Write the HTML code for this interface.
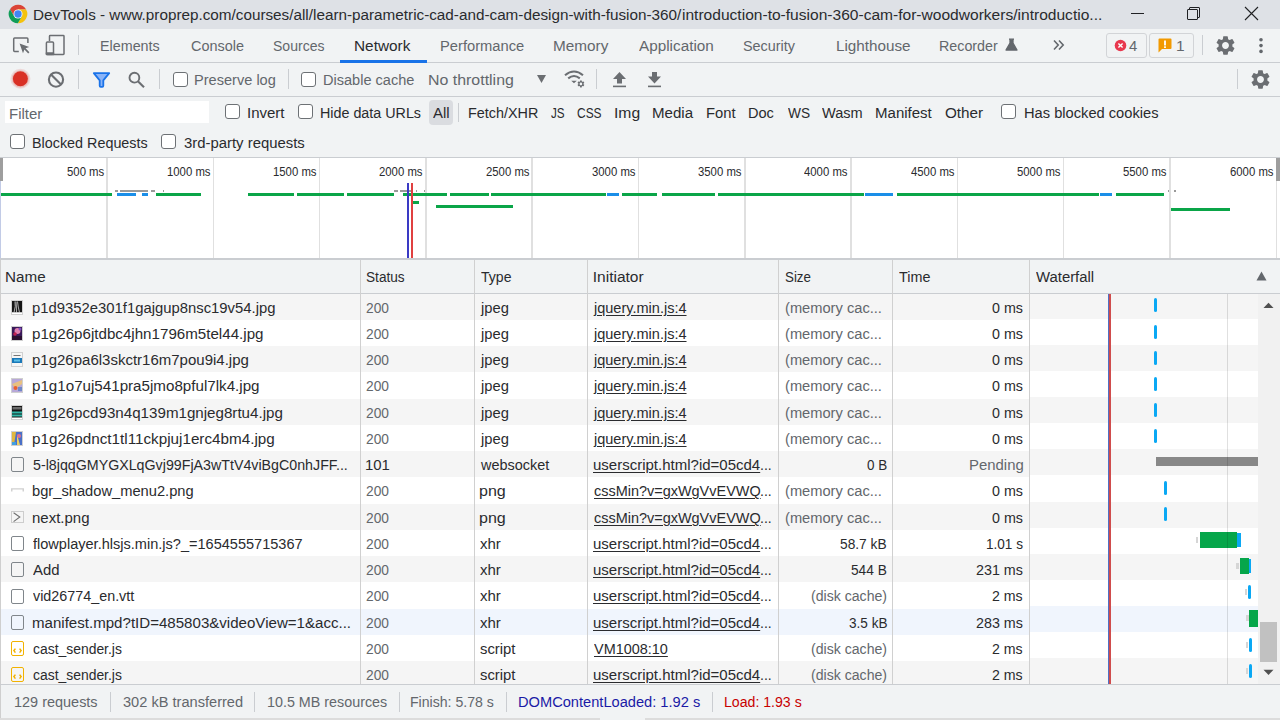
<!DOCTYPE html>
<html><head><meta charset="utf-8"><style>
*{box-sizing:border-box;margin:0;padding:0}
html,body{width:1280px;height:720px;overflow:hidden;background:#f1f3f4;font-family:"Liberation Sans",sans-serif;font-size:15px;color:#202124}
.a{position:absolute}
.t{position:absolute;white-space:nowrap;transform-origin:0 0}
</style></head><body>
<div class="a" style="left:0;top:0;width:1280px;height:29px;background:#dee1e6"></div>
<svg class="a" style="left:7.7px;top:3.6px" width="20" height="20" viewBox="0 0 20 20"><path d="M10 10L6.10 12.25L2.03 5.20A9.3 9.3 0 0 1 18.14 5.50L10.00 5.50Z" fill="#db4437"/> <path d="M10 10L10.00 5.50L18.14 5.50A9.3 9.3 0 0 1 9.83 19.30L13.90 12.25Z" fill="#f4c20d"/> <path d="M10 10L13.90 12.25L9.83 19.30A9.3 9.3 0 0 1 2.03 5.20L6.10 12.25Z" fill="#0f9d58"/> <circle cx="10" cy="10" r="4.5" fill="#fff"/><circle cx="10" cy="10" r="3.7" fill="#4285f4"/></svg>
<div class="a" style="left:1131px;top:13px;width:13px;height:1px;background:#202124"></div>
<div class="a" style="left:1189px;top:7px;width:11px;height:11px;border:1px solid #202124;border-radius:1px"></div>
<div class="a" style="left:1187px;top:9px;width:11px;height:11px;border:1px solid #202124;background:#dee1e6;border-radius:1px"></div>
<svg class="a" style="left:1244px;top:6px" width="15" height="15" viewBox="0 0 15 15"><path d="M1 1L14 14M14 1L1 14" stroke="#202124" stroke-width="1.1"/></svg>
<div class="a" style="left:0;top:62px;width:1280px;height:1px;background:#cacdd1"></div>
<svg class="a" style="left:12px;top:36px" width="20" height="20" viewBox="0 0 20 20">
 <path d="M6.8 15.5H2.6Q1.7 15.5 1.7 14.6V3Q1.7 2.1 2.6 2.1H15Q15.9 2.1 15.9 3V7" fill="none" stroke="#6b6e72" stroke-width="1.5"/>
 <path d="M7.6 7.6L17.2 11L13.6 12.3L17.4 16.2L16.2 17.4L12.4 13.5L11 17.2Z" fill="#6b6e72"/>
</svg>
<svg class="a" style="left:44px;top:34px" width="22" height="22" viewBox="0 0 22 22">
 <path d="M5.5 7V2.3Q5.5 1.6 6.2 1.6H19.3Q20 1.6 20 2.3V19.8Q20 20.5 19.3 20.5H9" fill="none" stroke="#6b6e72" stroke-width="1.5"/>
 <rect x="2.4" y="7.9" width="7.1" height="12.6" rx="1" fill="none" stroke="#6b6e72" stroke-width="1.5"/>
 <rect x="1.7" y="18.3" width="8.5" height="2.9" rx="0.8" fill="#6b6e72"/>
</svg>
<div class="a" style="left:78px;top:35px;width:1px;height:20px;background:#cacdd1"></div>
<div class="a" style="left:340px;top:60px;width:87px;height:3px;background:#1a73e8"></div>
<svg class="a" style="left:1005px;top:38px" width="13" height="13" viewBox="0 0 13 13"><path d="M4 1.2H9M5 1.2V5L1 12H12L8 5V1.2" fill="#63676c" stroke="#63676c" stroke-width="1.3" stroke-linejoin="round"/></svg>
<svg class="a" style="left:1052px;top:38px" width="14" height="14" viewBox="0 0 14 14"><path d="M2 2.5L6.2 7L2 11.5M7 2.5L11.2 7L7 11.5" fill="none" stroke="#63676c" stroke-width="1.6"/></svg>
<div class="a" style="left:1106px;top:33px;width:41px;height:25px;border:1px solid #d2d4d7;border-radius:3px"></div>
<svg class="a" style="left:1114px;top:39px" width="13" height="13" viewBox="0 0 13 13"><circle cx="6.5" cy="6.5" r="5.8" fill="#e8384e"/><path d="M4.4 4.4L8.6 8.6M8.6 4.4L4.4 8.6" stroke="#fff" stroke-width="1.4"/></svg>
<div class="a" style="left:1149px;top:33px;width:45px;height:25px;border:1px solid #d2d4d7;border-radius:3px"></div>
<svg class="a" style="left:1158px;top:38px" width="14" height="15" viewBox="0 0 14 15"><path d="M0.5 1.5Q0.5 0.5 1.5 0.5H12.5Q13.5 0.5 13.5 1.5V10Q13.5 11 12.5 11H4L0.5 14.5Z" fill="#f29900"/><rect x="6.1" y="2.5" width="1.8" height="5" fill="#fff"/><rect x="6.1" y="8.3" width="1.8" height="1.7" fill="#fff"/></svg>
<div class="a" style="left:1202px;top:35px;width:1px;height:20px;background:#cacdd1"></div>
<svg class="a" style="left:1214px;top:34px" width="23" height="23" viewBox="0 0 24 24"><path fill="#6b6e72" d="M19.14 12.94c.04-.3.06-.61.06-.94 0-.32-.02-.64-.07-.94l2.03-1.58a.49.49 0 0 0 .12-.61l-1.92-3.32a.488.488 0 0 0-.59-.22l-2.39.96c-.5-.38-1.03-.7-1.62-.94l-.36-2.54a.484.484 0 0 0-.48-.41h-3.84c-.24 0-.43.17-.47.41l-.36 2.54c-.59.24-1.13.57-1.62.94l-2.39-.96c-.22-.08-.47 0-.59.22L2.74 8.87c-.12.21-.08.47.12.61l2.03 1.58c-.05.3-.09.63-.09.94s.02.64.07.94l-2.03 1.58a.49.49 0 0 0-.12.61l1.92 3.32c.12.22.37.29.59.22l2.39-.96c.5.38 1.03.7 1.62.94l.36 2.54c.05.24.24.41.48.41h3.84c.24 0 .44-.17.47-.41l.36-2.54c.59-.24 1.13-.56 1.62-.94l2.39.96c.22.08.47 0 .59-.22l1.92-3.32c.12-.22.07-.47-.12-.61l-2.01-1.58zM12 15.6c-1.98 0-3.6-1.62-3.6-3.6s1.62-3.6 3.6-3.6 3.6 1.62 3.6 3.6-1.62 3.6-3.6 3.6z"/></svg>
<svg class="a" style="left:1257px;top:36px" width="8" height="20" viewBox="0 0 8 20"><circle cx="4" cy="3.8" r="1.8" fill="#63676c"/><circle cx="4" cy="9.6" r="1.8" fill="#63676c"/><circle cx="4" cy="15.4" r="1.8" fill="#63676c"/></svg>
<div class="a" style="left:0;top:96px;width:1280px;height:1px;background:#cacdd1"></div>
<svg class="a" style="left:8px;top:67px" width="25" height="25" viewBox="0 0 25 25"><circle cx="12.4" cy="11.8" r="10" fill="rgba(217,48,37,0.13)"/><circle cx="12.4" cy="11.8" r="8.6" fill="rgba(217,48,37,0.18)"/><circle cx="12.4" cy="11.8" r="7.5" fill="#d93025"/></svg>
<svg class="a" style="left:47px;top:70px" width="18" height="19" viewBox="0 0 18 19"><circle cx="9" cy="9.6" r="7.1" fill="none" stroke="#6b6e72" stroke-width="2.1"/><path d="M4 4.6L14 14.6" stroke="#6b6e72" stroke-width="2.1"/></svg>
<div class="a" style="left:78px;top:69px;width:1px;height:20px;background:#cacdd1"></div>
<svg class="a" style="left:92px;top:72px" width="19" height="16" viewBox="0 0 19 16"><path d="M1.8 1.2H17.2L11.3 8.3V13.8Q11.3 14.8 10.3 14.8H8.7Q7.7 14.8 7.7 13.8V8.3Z" fill="#8ab4f8" stroke="#1a73e8" stroke-width="1.8" stroke-linejoin="round"/></svg>
<svg class="a" style="left:127px;top:70px" width="19" height="19" viewBox="0 0 19 19"><circle cx="7.4" cy="7.7" r="4.9" fill="none" stroke="#6b6e72" stroke-width="1.9"/><path d="M10.9 11.2L17 17.3" stroke="#6b6e72" stroke-width="2.1"/></svg>
<div class="a" style="left:159px;top:69px;width:1px;height:20px;background:#cacdd1"></div>
<div class="a" style="left:173px;top:72px;width:15px;height:15px;border:1.4px solid #6d7175;border-radius:3px;background:#fff"></div>
<div class="a" style="left:288px;top:69px;width:1px;height:20px;background:#cacdd1"></div>
<div class="a" style="left:301px;top:72px;width:15px;height:15px;border:1.4px solid #6d7175;border-radius:3px;background:#fff"></div>
<svg class="a" style="left:537px;top:75px" width="9" height="8" viewBox="0 0 9 8"><path d="M0 0H9L4.5 8Z" fill="#6b6e72"/></svg>
<svg class="a" style="left:563px;top:69px" width="24" height="20" viewBox="0 0 24 20">
 <path d="M2 6.2Q11 -1.2 20 6.2" fill="none" stroke="#6b6e72" stroke-width="2.1"/>
 <path d="M5.2 9.4Q11 4.6 16.8 9.4" fill="none" stroke="#6b6e72" stroke-width="2.1"/>
 <path d="M8.2 11.8L11 14.2L13.8 11.8Z" fill="#6b6e72"/>
 <g transform="translate(13.6,10.6) scale(0.36)"><path fill="#6b6e72" d="M19.14 12.94c.04-.3.06-.61.06-.94 0-.32-.02-.64-.07-.94l2.03-1.58a.49.49 0 0 0 .12-.61l-1.92-3.32a.488.488 0 0 0-.59-.22l-2.39.96c-.5-.38-1.03-.7-1.62-.94l-.36-2.54a.484.484 0 0 0-.48-.41h-3.84c-.24 0-.43.17-.47.41l-.36 2.54c-.59.24-1.13.57-1.62.94l-2.39-.96c-.22-.08-.47 0-.59.22L2.74 8.87c-.12.21-.08.47.12.61l2.03 1.58c-.05.3-.09.63-.09.94s.02.64.07.94l-2.03 1.58a.49.49 0 0 0-.12.61l1.92 3.32c.12.22.37.29.59.22l2.39-.96c.5.38 1.03.7 1.62.94l.36 2.54c.05.24.24.41.48.41h3.84c.24 0 .44-.17.47-.41l.36-2.54c.59-.24 1.13-.56 1.62-.94l2.39.96c.22.08.47 0 .59-.22l1.92-3.32c.12-.22.07-.47-.12-.61l-2.01-1.58zM12 15.6c-1.98 0-3.6-1.62-3.6-3.6s1.62-3.6 3.6-3.6 3.6 1.62 3.6 3.6-1.62 3.6-3.6 3.6z"/></g>
</svg>
<div class="a" style="left:596px;top:69px;width:1px;height:20px;background:#cacdd1"></div>
<svg class="a" style="left:612px;top:71px" width="15" height="17" viewBox="0 0 15 17"><path d="M7.5 1L14 8H10V12.5H5V8H1Z" fill="#6b6e72"/><rect x="1" y="14.6" width="13" height="1.6" fill="#6b6e72"/></svg>
<svg class="a" style="left:647px;top:71px" width="15" height="17" viewBox="0 0 15 17"><path d="M7.5 12.5L14 5.5H10V1H5V5.5H1Z" fill="#6b6e72"/><rect x="1" y="14.6" width="13" height="1.6" fill="#6b6e72"/></svg>
<div class="a" style="left:1237px;top:69px;width:1px;height:20px;background:#cacdd1"></div>
<svg class="a" style="left:1249px;top:68px" width="23" height="23" viewBox="0 0 24 24"><path fill="#6b6e72" d="M19.14 12.94c.04-.3.06-.61.06-.94 0-.32-.02-.64-.07-.94l2.03-1.58a.49.49 0 0 0 .12-.61l-1.92-3.32a.488.488 0 0 0-.59-.22l-2.39.96c-.5-.38-1.03-.7-1.62-.94l-.36-2.54a.484.484 0 0 0-.48-.41h-3.84c-.24 0-.43.17-.47.41l-.36 2.54c-.59.24-1.13.57-1.62.94l-2.39-.96c-.22-.08-.47 0-.59.22L2.74 8.87c-.12.21-.08.47.12.61l2.03 1.58c-.05.3-.09.63-.09.94s.02.64.07.94l-2.03 1.58a.49.49 0 0 0-.12.61l1.92 3.32c.12.22.37.29.59.22l2.39-.96c.5.38 1.03.7 1.62.94l.36 2.54c.05.24.24.41.48.41h3.84c.24 0 .44-.17.47-.41l.36-2.54c.59-.24 1.13-.56 1.62-.94l2.39.96c.22.08.47 0 .59-.22l1.92-3.32c.12-.22.07-.47-.12-.61l-2.01-1.58zM12 15.6c-1.98 0-3.6-1.62-3.6-3.6s1.62-3.6 3.6-3.6 3.6 1.62 3.6 3.6-1.62 3.6-3.6 3.6z"/></svg>
<div class="a" style="left:5px;top:101px;width:204px;height:22px;background:#fff"></div>
<div class="a" style="left:225px;top:104px;width:15px;height:15px;border:1.4px solid #6d7175;border-radius:3px;background:#fff"></div>
<div class="a" style="left:298px;top:104px;width:15px;height:15px;border:1.4px solid #6d7175;border-radius:3px;background:#fff"></div>
<div class="a" style="left:429px;top:100px;width:24px;height:25px;background:#dadce0;border-radius:4px"></div>
<div class="a" style="left:458px;top:103px;width:1px;height:19px;background:#cacdd1"></div>
<div class="a" style="left:1001px;top:104px;width:15px;height:15px;border:1.4px solid #6d7175;border-radius:3px;background:#fff"></div>
<div class="a" style="left:10px;top:134px;width:15px;height:15px;border:1.4px solid #6d7175;border-radius:3px;background:#fff"></div>
<div class="a" style="left:161px;top:134px;width:15px;height:15px;border:1.4px solid #6d7175;border-radius:3px;background:#fff"></div>
<div class="a" style="left:0;top:157px;width:1280px;height:1px;background:#cacdd1"></div>
<div class="a" style="left:0;top:158px;width:1280px;height:100px;background:#fff"></div>
<div class="a" style="left:106.25px;top:158px;width:1.5px;height:100px;background:#e0e0e0"></div>
<div class="a" style="left:212.55px;top:158px;width:1.5px;height:100px;background:#e0e0e0"></div>
<div class="a" style="left:318.85px;top:158px;width:1.5px;height:100px;background:#e0e0e0"></div>
<div class="a" style="left:425.15px;top:158px;width:1.5px;height:100px;background:#e0e0e0"></div>
<div class="a" style="left:531.45px;top:158px;width:1.5px;height:100px;background:#e0e0e0"></div>
<div class="a" style="left:637.75px;top:158px;width:1.5px;height:100px;background:#e0e0e0"></div>
<div class="a" style="left:744.05px;top:158px;width:1.5px;height:100px;background:#e0e0e0"></div>
<div class="a" style="left:850.35px;top:158px;width:1.5px;height:100px;background:#e0e0e0"></div>
<div class="a" style="left:956.65px;top:158px;width:1.5px;height:100px;background:#e0e0e0"></div>
<div class="a" style="left:1062.95px;top:158px;width:1.5px;height:100px;background:#e0e0e0"></div>
<div class="a" style="left:1169.25px;top:158px;width:1.5px;height:100px;background:#e0e0e0"></div>
<div class="a" style="left:1275.55px;top:158px;width:1.5px;height:100px;background:#e0e0e0"></div>
<div class="a" style="left:0;top:258px;width:1280px;height:2px;background:#cacdd1"></div>
<div class="a" style="left:0;top:158px;width:3px;height:23px;background:#9e9e9e"></div>
<div class="a" style="left:0;top:181px;width:1px;height:77px;background:#c2cbe6"></div>
<div class="a" style="left:1276px;top:158px;width:4px;height:23px;background:#9e9e9e"></div>
<div class="a" style="left:1.0px;top:193px;width:110.7px;height:3px;background:#0aa548"></div>
<div class="a" style="left:116.9px;top:193px;width:18.9px;height:3px;background:#1a8ee8"></div>
<div class="a" style="left:141.8px;top:193px;width:6.4px;height:3px;background:#1a8ee8"></div>
<div class="a" style="left:156.0px;top:193px;width:44.8px;height:3px;background:#0aa548"></div>
<div class="a" style="left:247.6px;top:193px;width:46.4px;height:3px;background:#0aa548"></div>
<div class="a" style="left:297.2px;top:193px;width:46.8px;height:3px;background:#0aa548"></div>
<div class="a" style="left:347.0px;top:193px;width:46.7px;height:3px;background:#0aa548"></div>
<div class="a" style="left:403.0px;top:193px;width:43.7px;height:3px;background:#0aa548"></div>
<div class="a" style="left:449.6px;top:193px;width:39.1px;height:3px;background:#0aa548"></div>
<div class="a" style="left:491.0px;top:193px;width:114.8px;height:3px;background:#0aa548"></div>
<div class="a" style="left:607.0px;top:193px;width:11.9px;height:3px;background:#1a8ee8"></div>
<div class="a" style="left:621.7px;top:193px;width:35.0px;height:3px;background:#0aa548"></div>
<div class="a" style="left:661.9px;top:193px;width:53.1px;height:3px;background:#0aa548"></div>
<div class="a" style="left:718.0px;top:193px;width:146.2px;height:3px;background:#0aa548"></div>
<div class="a" style="left:865.3px;top:193px;width:27.8px;height:3px;background:#1a8ee8"></div>
<div class="a" style="left:897.0px;top:193px;width:202.0px;height:3px;background:#0aa548"></div>
<div class="a" style="left:1100.2px;top:193px;width:12.0px;height:3px;background:#1a8ee8"></div>
<div class="a" style="left:1115.5px;top:193px;width:48.1px;height:3px;background:#0aa548"></div>
<div class="a" style="left:115.0px;top:190px;width:3.0px;height:2px;background:#9a9a9a"></div>
<div class="a" style="left:119.5px;top:190px;width:28.7px;height:2px;background:#9a9a9a"></div>
<div class="a" style="left:151.0px;top:190px;width:4.0px;height:2px;background:#9a9a9a"></div>
<div class="a" style="left:163.0px;top:190px;width:1.0px;height:2px;background:#9a9a9a"></div>
<div class="a" style="left:394.0px;top:190px;width:4.0px;height:2px;background:#9a9a9a"></div>
<div class="a" style="left:400.0px;top:190px;width:8.0px;height:2px;background:#9a9a9a"></div>
<div class="a" style="left:409.0px;top:190px;width:3.0px;height:2px;background:#9a9a9a"></div>
<div class="a" style="left:416.0px;top:190px;width:1.0px;height:2px;background:#9a9a9a"></div>
<div class="a" style="left:424.0px;top:190px;width:1.0px;height:2px;background:#9a9a9a"></div>
<div class="a" style="left:1167.5px;top:190px;width:1.5px;height:2px;background:#9a9a9a"></div>
<div class="a" style="left:1174.0px;top:190px;width:1.5px;height:2px;background:#9a9a9a"></div>
<div class="a" style="left:412.4px;top:201px;width:6.6px;height:3px;background:#0aa548"></div>
<div class="a" style="left:436.4px;top:205px;width:77.1px;height:3px;background:#0aa548"></div>
<div class="a" style="left:1170.5px;top:208px;width:59.0px;height:3px;background:#0aa548"></div>
<div class="a" style="left:407.4px;top:183px;width:1.7px;height:75px;background:#3a3ac4"></div>
<div class="a" style="left:411px;top:183px;width:1.8px;height:75px;background:#e04040"></div>
<div class="a" style="left:0;top:260px;width:1280px;height:33px;background:#f1f3f4"></div>
<div class="a" style="left:0;top:293px;width:1280px;height:1px;background:#cacdd1"></div>
<svg class="a" style="left:1256px;top:271px" width="11" height="10" viewBox="0 0 11 10"><path d="M0.5 9.5H10.5L5.5 0.5Z" fill="#63676c"/></svg>
<div class="a" style="left:0;top:294px;width:1258px;height:390px;background:#fff;overflow:hidden">
<div class="a" style="left:0;top:-0.40px;width:1258px;height:26.25px;background:#f5f5f5"></div>
<div class="a" style="left:0;top:52.10px;width:1258px;height:26.25px;background:#f5f5f5"></div>
<div class="a" style="left:0;top:104.60px;width:1258px;height:26.25px;background:#f5f5f5"></div>
<div class="a" style="left:0;top:157.10px;width:1258px;height:26.25px;background:#f5f5f5"></div>
<div class="a" style="left:0;top:209.60px;width:1258px;height:26.25px;background:#f5f5f5"></div>
<div class="a" style="left:0;top:262.10px;width:1258px;height:26.25px;background:#f5f5f5"></div>
<div class="a" style="left:0;top:314.60px;width:1258px;height:26.25px;background:#f0f5fd"></div>
<div class="a" style="left:0;top:367.10px;width:1258px;height:26.25px;background:#f5f5f5"></div>
</div>
<div class="a" style="left:1030px;top:294px;width:228px;height:390px;background:#fff;overflow:hidden">
<div class="a" style="left:0;top:-1.10px;width:228px;height:26.08px;background:#f5f5f5"></div>
<div class="a" style="left:0;top:51.06px;width:228px;height:26.08px;background:#f5f5f5"></div>
<div class="a" style="left:0;top:103.22px;width:228px;height:26.08px;background:#f5f5f5"></div>
<div class="a" style="left:0;top:155.38px;width:228px;height:26.08px;background:#f5f5f5"></div>
<div class="a" style="left:0;top:207.54px;width:228px;height:26.08px;background:#f5f5f5"></div>
<div class="a" style="left:0;top:259.70px;width:228px;height:26.08px;background:#f5f5f5"></div>
<div class="a" style="left:0;top:311.86px;width:228px;height:26.08px;background:#f0f5fd"></div>
<div class="a" style="left:0;top:364.02px;width:228px;height:26.08px;background:#f5f5f5"></div>
</div>
<div class="a" style="left:360.0px;top:260px;width:1px;height:424px;background:#d0d0d0"></div>
<div class="a" style="left:474.0px;top:260px;width:1px;height:424px;background:#d0d0d0"></div>
<div class="a" style="left:587.0px;top:260px;width:1px;height:424px;background:#d0d0d0"></div>
<div class="a" style="left:778.0px;top:260px;width:1px;height:424px;background:#d0d0d0"></div>
<div class="a" style="left:892.0px;top:260px;width:1px;height:424px;background:#d0d0d0"></div>
<div class="a" style="left:1029.0px;top:260px;width:1px;height:424px;background:#d0d0d0"></div>
<div class="a" style="left:0;top:260px;width:1px;height:424px;background:#cfcfcf"></div>
<div class="a" style="left:1108px;top:294px;width:1.2px;height:390px;background:#5070c4"></div>
<div class="a" style="left:1109.2px;top:294px;width:2px;height:390px;background:#d04c4c"></div>
<div class="a" style="left:1258px;top:294px;width:22px;height:390px;background:#f1f1f1"></div>
<svg class="a" style="left:1263px;top:302px" width="11" height="7" viewBox="0 0 11 7"><path d="M0.5 6H10.5L5.5 0.8Z" fill="#505050"/></svg>
<svg class="a" style="left:1263px;top:669px" width="11" height="7" viewBox="0 0 11 7"><path d="M0.5 0.8H10.5L5.5 6Z" fill="#505050"/></svg>
<div class="a" style="left:1260px;top:622px;width:17px;height:40px;background:#c1c1c1"></div>
<svg class="a" style="left:11px;top:299.5px" width="12" height="15" viewBox="0 0 12 15"><rect x="0.5" y="0.5" width="11" height="14" fill="#fff" stroke="#d0d0d0"/><rect x="1" y="1" width="10" height="11.5" fill="#151515"/><path d="M4 1.5Q5 6 3 12.5M6.5 1.5Q7 7 8.5 12.5M5 1.5Q5.5 7 5.5 12.5" stroke="#bdbdbd" stroke-width="0.9" fill="none"/><rect x="1" y="12.5" width="10" height="1.5" fill="#fff"/></svg>
<div class="a" style="left:1154.0px;top:298.4px;width:3px;height:14px;background:#0aa8f4;border-radius:1.5px"></div>
<svg class="a" style="left:11px;top:325.8px" width="12" height="15" viewBox="0 0 12 15"><rect x="0.5" y="0.5" width="11" height="14" fill="#fff" stroke="#d0d0d0"/><rect x="1" y="1" width="10" height="13" fill="#3a1a5a"/><circle cx="6.5" cy="5" r="3" fill="#e080b0"/><circle cx="4" cy="8" r="1.8" fill="#c02050"/><rect x="1" y="10" width="10" height="4" fill="#2a1030"/><circle cx="9" cy="3" r="1.5" fill="#8050c0"/></svg>
<div class="a" style="left:1154.0px;top:324.5px;width:3px;height:14px;background:#0aa8f4;border-radius:1.5px"></div>
<svg class="a" style="left:11px;top:352.0px" width="12" height="15" viewBox="0 0 12 15"><rect x="0.5" y="0.5" width="11" height="14" fill="#fff" stroke="#d0d0d0"/><rect x="1" y="1" width="10" height="13" fill="#f6f6f6"/><rect x="2.5" y="3" width="7" height="1" fill="#777"/><rect x="1" y="6" width="10" height="5" fill="#1a78b8"/><rect x="3" y="7.5" width="6" height="2" fill="#5cc0e8"/></svg>
<div class="a" style="left:1154.0px;top:350.6px;width:3px;height:14px;background:#0aa8f4;border-radius:1.5px"></div>
<svg class="a" style="left:11px;top:378.3px" width="12" height="15" viewBox="0 0 12 15"><rect x="0.5" y="0.5" width="11" height="14" fill="#fff" stroke="#d0d0d0"/><rect x="1" y="1" width="10" height="13" fill="#b8a8d8"/><path d="M1 6L11 2V6L4 11Z" fill="#e8c080"/><circle cx="4.5" cy="10" r="2" fill="#e86030"/><rect x="7" y="9" width="4" height="4" fill="#7088c8"/></svg>
<div class="a" style="left:1154.0px;top:376.7px;width:3px;height:14px;background:#0aa8f4;border-radius:1.5px"></div>
<svg class="a" style="left:11px;top:404.5px" width="12" height="15" viewBox="0 0 12 15"><rect x="0.5" y="0.5" width="11" height="14" fill="#fff" stroke="#d0d0d0"/><rect x="1" y="1" width="10" height="13" fill="#151515"/><rect x="1.5" y="2" width="9" height="2.5" fill="#6a6a6a"/><rect x="1" y="6.5" width="10" height="2" fill="#30b8a8"/><rect x="1" y="9.5" width="10" height="2" fill="#30b8a8"/><rect x="1" y="12.5" width="10" height="1.5" fill="#fff"/></svg>
<div class="a" style="left:1154.0px;top:402.8px;width:3px;height:14px;background:#0aa8f4;border-radius:1.5px"></div>
<svg class="a" style="left:11px;top:430.8px" width="12" height="15" viewBox="0 0 12 15"><rect x="0.5" y="0.5" width="11" height="14" fill="#fff" stroke="#d0d0d0"/><rect x="1" y="1" width="10" height="13" fill="#4a70c8"/><path d="M1 1H5L3 14H1Z" fill="#e0b840"/><path d="M6 3L9 14H6Z" fill="#f0d060"/><circle cx="8" cy="5" r="2" fill="#e07090"/><rect x="1" y="11" width="4" height="3" fill="#40a0e0"/></svg>
<div class="a" style="left:1154.0px;top:428.8px;width:3px;height:14px;background:#0aa8f4;border-radius:1.5px"></div>
<div class="a" style="left:11px;top:457.3px;width:13px;height:15px;border:1.5px solid #80868b;border-radius:2px"></div>
<div class="a" style="left:1155.7px;top:457.4px;width:102.0px;height:9px;background:#888"></div>
<svg class="a" style="left:11px;top:488.4px" width="13" height="4" viewBox="0 0 13 4"><path d="M0.75 3.5V0.9H12.25V3.5" fill="none" stroke="#cfcfcf" stroke-width="1.4"/></svg>
<div class="a" style="left:1164.0px;top:481.0px;width:3px;height:14px;background:#0aa8f4;border-radius:1.5px"></div>
<div class="a" style="left:11px;top:510.9px;width:13px;height:12px;border:1px solid #cdcdcd"></div>
<svg class="a" style="left:11px;top:510.9px" width="13" height="12" viewBox="0 0 13 12"><path d="M2.6 1.8L8.8 6L2.6 10.6" fill="none" stroke="#6f6f6f" stroke-width="1.1"/></svg>
<div class="a" style="left:1164.0px;top:507.1px;width:3px;height:14px;background:#0aa8f4;border-radius:1.5px"></div>
<div class="a" style="left:11px;top:536.1px;width:13px;height:15px;border:1.5px solid #80868b;border-radius:2px"></div>
<div class="a" style="left:1195.6px;top:537.2px;width:2.5px;height:6px;background:#d6d6d6"></div>
<div class="a" style="left:1199.7px;top:531.9px;width:37.5px;height:16.6px;background:#06a64a"></div>
<div class="a" style="left:1237.2px;top:533.2px;width:3.7px;height:14px;background:#0aa8f4"></div>
<div class="a" style="left:11px;top:562.3px;width:13px;height:15px;border:1.5px solid #80868b;border-radius:2px"></div>
<div class="a" style="left:1236.0px;top:563.2px;width:2.5px;height:6px;background:#d6d6d6"></div>
<div class="a" style="left:1239.7px;top:557.9px;width:9.0px;height:16.6px;background:#06a64a"></div>
<div class="a" style="left:1248.7px;top:559.2px;width:2.2px;height:14px;background:#0aa8f4"></div>
<div class="a" style="left:11px;top:588.6px;width:13px;height:15px;border:1.5px solid #80868b;border-radius:2px"></div>
<div class="a" style="left:1245.0px;top:589.3px;width:2px;height:6px;background:#d6d6d6"></div>
<div class="a" style="left:1248.1px;top:585.3px;width:3px;height:14px;background:#0aa8f4;border-radius:1.5px"></div>
<div class="a" style="left:11px;top:614.8px;width:13px;height:15px;border:1.5px solid #80868b;border-radius:2px"></div>
<div class="a" style="left:1246.0px;top:615.4px;width:2.5px;height:6px;background:#d6d6d6"></div>
<div class="a" style="left:1249.3px;top:610.1px;width:9.0px;height:16.6px;background:#06a64a"></div>
<div class="a" style="left:11px;top:640.8px;width:13px;height:15px;border:1.6px solid #f2b200;border-radius:2px"></div>
<svg class="a" style="left:11px;top:640.8px" width="13" height="15" viewBox="0 0 13 15"><path d="M4.4 7.6L2.9 9.6L4.4 11.6M8.6 7.6L10.1 9.6L8.6 11.6" fill="none" stroke="#f2b200" stroke-width="1.5"/></svg>
<div class="a" style="left:1246.0px;top:641.5px;width:2px;height:6px;background:#d6d6d6"></div>
<div class="a" style="left:1249.3px;top:637.5px;width:3px;height:14px;background:#0aa8f4;border-radius:1.5px"></div>
<div class="a" style="left:11px;top:667.0px;width:13px;height:15px;border:1.6px solid #f2b200;border-radius:2px"></div>
<svg class="a" style="left:11px;top:667.0px" width="13" height="15" viewBox="0 0 13 15"><path d="M4.4 7.6L2.9 9.6L4.4 11.6M8.6 7.6L10.1 9.6L8.6 11.6" fill="none" stroke="#f2b200" stroke-width="1.5"/></svg>
<div class="a" style="left:1246.0px;top:667.6px;width:2px;height:6px;background:#d6d6d6"></div>
<div class="a" style="left:1249.3px;top:663.6px;width:3px;height:14px;background:#0aa8f4;border-radius:1.5px"></div>
<div class="a" style="left:1227px;top:294px;width:1px;height:390px;background:rgba(0,0,0,0.12)"></div>
<div class="a" style="left:0;top:684px;width:1280px;height:1px;background:#cacdd1"></div>
<div class="a" style="left:0;top:685px;width:1280px;height:33px;background:#f1f3f4"></div>
<div class="a" style="left:0;top:718px;width:600px;height:2px;background:#dcdcdc"></div>
<div class="a" style="left:645px;top:718px;width:635px;height:2px;background:#dcdcdc"></div>
<div class="a" style="left:0;top:685px;width:1px;height:33px;background:#cfcfcf"></div>
<div class="a" style="left:110px;top:692px;width:1px;height:20px;background:#cacdd1"></div>
<div class="a" style="left:254px;top:692px;width:1px;height:20px;background:#cacdd1"></div>
<div class="a" style="left:399px;top:692px;width:1px;height:20px;background:#cacdd1"></div>
<div class="a" style="left:506px;top:692px;width:1px;height:20px;background:#cacdd1"></div>
<div class="a" style="left:712px;top:692px;width:1px;height:20px;background:#cacdd1"></div>
<div class="t" style="left:33.01px;top:5.13px;line-height:19px;font-size:15.5px;color:#2a2b2e;transform:scaleX(0.9850);">DevTools - www.proprep.com/courses/all/learn-parametric-cad-and-cam-design-with-fusion-360/</div>
<div class="t" style="left:682.00px;top:5.13px;line-height:19px;font-size:15.5px;color:#2a2b2e;transform:scaleX(1.0039);">introduction-to-fusion-360-cam-for-woodworkers/introductio...</div>
<div class="t" style="left:100.38px;top:36.13px;line-height:19px;font-size:15.5px;color:#63676c;transform:scaleX(0.9239);">Elements</div>
<div class="t" style="left:191.00px;top:36.13px;line-height:19px;font-size:15.5px;color:#63676c;transform:scaleX(0.9316);">Console</div>
<div class="t" style="left:273.00px;top:36.13px;line-height:19px;font-size:15.5px;color:#63676c;transform:scaleX(0.9053);">Sources</div>
<div class="t" style="left:440.35px;top:36.13px;line-height:19px;font-size:15.5px;color:#63676c;transform:scaleX(0.9494);">Performance</div>
<div class="t" style="left:552.81px;top:36.13px;line-height:19px;font-size:15.5px;color:#63676c;transform:scaleX(0.9887);">Memory</div>
<div class="t" style="left:638.80px;top:36.13px;line-height:19px;font-size:15.5px;color:#63676c;transform:scaleX(0.9866);">Application</div>
<div class="t" style="left:743.40px;top:36.13px;line-height:19px;font-size:15.5px;color:#63676c;transform:scaleX(0.9282);">Security</div>
<div class="t" style="left:836.02px;top:36.13px;line-height:19px;font-size:15.5px;color:#63676c;transform:scaleX(0.9835);">Lighthouse</div>
<div class="t" style="left:939.38px;top:36.13px;line-height:19px;font-size:15.5px;color:#63676c;transform:scaleX(0.9219);">Recorder</div>
<div class="t" style="left:354.01px;top:36.13px;line-height:19px;font-size:15.5px;color:#2a2b2e;transform:scaleX(0.9912);">Network</div>
<div class="t" style="left:1129.40px;top:36.13px;line-height:19px;font-size:15.5px;color:#63676c;transform:scaleX(0.9556);">4</div>
<div class="t" style="left:1176.00px;top:36.13px;line-height:19px;font-size:15.5px;color:#63676c;">1</div>
<div class="t" style="left:194.36px;top:70.13px;line-height:19px;font-size:15.5px;color:#63676c;transform:scaleX(0.9404);">Preserve log</div>
<div class="t" style="left:323.06px;top:70.13px;line-height:19px;font-size:15.5px;color:#63676c;transform:scaleX(0.9380);">Disable cache</div>
<div class="t" style="left:427.77px;top:70.13px;line-height:19px;font-size:15.5px;color:#63676c;transform:scaleX(1.0275);">No throttling</div>
<div class="t" style="left:8.54px;top:104.13px;line-height:19px;font-size:15.5px;color:#63676c;transform:scaleX(0.9645);">Filter</div>
<div class="t" style="left:246.83px;top:103.13px;line-height:19px;font-size:15.5px;color:#2a2b2e;transform:scaleX(0.9673);">Invert</div>
<div class="t" style="left:320.08px;top:103.13px;line-height:19px;font-size:15.5px;color:#2a2b2e;transform:scaleX(0.9230);">Hide data URLs</div>
<div class="t" style="left:432.80px;top:103.13px;line-height:19px;font-size:15.5px;color:#2a2b2e;transform:scaleX(0.9653);">All</div>
<div class="t" style="left:467.87px;top:103.13px;line-height:19px;font-size:15.5px;color:#2a2b2e;transform:scaleX(0.9276);">Fetch/XHR</div>
<div class="t" style="left:550.60px;top:103.13px;line-height:19px;font-size:15.5px;color:#2a2b2e;transform:scaleX(0.7549);">JS</div>
<div class="t" style="left:577.00px;top:103.13px;line-height:19px;font-size:15.5px;color:#2a2b2e;transform:scaleX(0.7706);">CSS</div>
<div class="t" style="left:613.99px;top:103.13px;line-height:19px;font-size:15.5px;color:#2a2b2e;transform:scaleX(1.0116);">Img</div>
<div class="t" style="left:652.33px;top:103.13px;line-height:19px;font-size:15.5px;color:#2a2b2e;transform:scaleX(0.9737);">Media</div>
<div class="t" style="left:706.05px;top:103.13px;line-height:19px;font-size:15.5px;color:#2a2b2e;transform:scaleX(0.9541);">Font</div>
<div class="t" style="left:748.36px;top:103.13px;line-height:19px;font-size:15.5px;color:#2a2b2e;transform:scaleX(0.9398);">Doc</div>
<div class="t" style="left:787.50px;top:103.13px;line-height:19px;font-size:15.5px;color:#2a2b2e;transform:scaleX(0.8851);">WS</div>
<div class="t" style="left:822.00px;top:103.13px;line-height:19px;font-size:15.5px;color:#2a2b2e;transform:scaleX(0.9381);">Wasm</div>
<div class="t" style="left:874.53px;top:103.13px;line-height:19px;font-size:15.5px;color:#2a2b2e;transform:scaleX(0.9696);">Manifest</div>
<div class="t" style="left:944.50px;top:103.13px;line-height:19px;font-size:15.5px;color:#2a2b2e;transform:scaleX(0.9844);">Other</div>
<div class="t" style="left:1023.55px;top:103.13px;line-height:19px;font-size:15.5px;color:#2a2b2e;transform:scaleX(0.9462);">Has blocked cookies</div>
<div class="t" style="left:32.07px;top:133.13px;line-height:19px;font-size:15.5px;color:#2a2b2e;transform:scaleX(0.9261);">Blocked Requests</div>
<div class="t" style="left:184.00px;top:133.13px;line-height:19px;font-size:15.5px;color:#2a2b2e;transform:scaleX(0.9601);">3rd-party requests</div>
<div class="t" style="left:66.60px;top:165.17px;line-height:15px;font-size:12.5px;color:#2a2b2e;transform:scaleX(0.9082);">500 ms</div>
<div class="t" style="left:166.60px;top:165.17px;line-height:15px;font-size:12.5px;color:#2a2b2e;transform:scaleX(0.9079);">1000 ms</div>
<div class="t" style="left:272.90px;top:165.17px;line-height:15px;font-size:12.5px;color:#2a2b2e;transform:scaleX(0.9079);">1500 ms</div>
<div class="t" style="left:379.20px;top:165.17px;line-height:15px;font-size:12.5px;color:#2a2b2e;transform:scaleX(0.9079);">2000 ms</div>
<div class="t" style="left:485.50px;top:165.17px;line-height:15px;font-size:12.5px;color:#2a2b2e;transform:scaleX(0.9079);">2500 ms</div>
<div class="t" style="left:591.80px;top:165.17px;line-height:15px;font-size:12.5px;color:#2a2b2e;transform:scaleX(0.9079);">3000 ms</div>
<div class="t" style="left:698.10px;top:165.17px;line-height:15px;font-size:12.5px;color:#2a2b2e;transform:scaleX(0.9079);">3500 ms</div>
<div class="t" style="left:804.40px;top:165.17px;line-height:15px;font-size:12.5px;color:#2a2b2e;transform:scaleX(0.9079);">4000 ms</div>
<div class="t" style="left:910.70px;top:165.17px;line-height:15px;font-size:12.5px;color:#2a2b2e;transform:scaleX(0.9079);">4500 ms</div>
<div class="t" style="left:1017.00px;top:165.17px;line-height:15px;font-size:12.5px;color:#2a2b2e;transform:scaleX(0.9079);">5000 ms</div>
<div class="t" style="left:1123.30px;top:165.17px;line-height:15px;font-size:12.5px;color:#2a2b2e;transform:scaleX(0.9079);">5500 ms</div>
<div class="t" style="left:1229.60px;top:165.17px;line-height:15px;font-size:12.5px;color:#2a2b2e;transform:scaleX(0.9079);">6000 ms</div>
<div class="t" style="left:5.32px;top:267.13px;line-height:19px;font-size:15.5px;color:#2a2b2e;transform:scaleX(0.9817);">Name</div>
<div class="t" style="left:366.30px;top:267.13px;line-height:19px;font-size:15.5px;color:#2a2b2e;transform:scaleX(0.8803);">Status</div>
<div class="t" style="left:480.70px;top:267.13px;line-height:19px;font-size:15.5px;color:#2a2b2e;transform:scaleX(0.9065);">Type</div>
<div class="t" style="left:592.80px;top:267.13px;line-height:19px;font-size:15.5px;color:#2a2b2e;">Initiator</div>
<div class="t" style="left:784.50px;top:267.13px;line-height:19px;font-size:15.5px;color:#2a2b2e;transform:scaleX(0.8601);">Size</div>
<div class="t" style="left:899.40px;top:267.13px;line-height:19px;font-size:15.5px;color:#2a2b2e;transform:scaleX(0.9264);">Time</div>
<div class="t" style="left:1035.80px;top:267.13px;line-height:19px;font-size:15.5px;color:#2a2b2e;transform:scaleX(0.9595);">Waterfall</div>
<div class="t" style="left:31.84px;top:298.13px;line-height:19px;font-size:15.5px;color:#2a2b2e;transform:scaleX(0.9575);">p1d9352e301f1gajgup8nsc19v54.jpg</div>
<div class="t" style="left:366.30px;top:298.13px;line-height:19px;font-size:15.5px;color:#63676c;transform:scaleX(0.8879);">200</div>
<div class="t" style="left:481.25px;top:298.13px;line-height:19px;font-size:15.5px;color:#2a2b2e;transform:scaleX(0.9500);">jpeg</div>
<div class="t" style="left:594.44px;top:298.13px;line-height:19px;font-size:15.5px;color:#2a2b2e;transform:scaleX(0.9366);text-decoration:underline;text-underline-offset:2px">jquery.min.js:4</div>
<div class="t" style="left:784.70px;top:298.13px;line-height:19px;font-size:15.5px;color:#63676c;transform:scaleX(0.9459);">(memory cac...</div>
<div class="t" style="left:992.00px;top:298.13px;line-height:19px;font-size:15.5px;color:#2a2b2e;transform:scaleX(0.9220);">0 ms</div>
<div class="t" style="left:31.82px;top:324.13px;line-height:19px;font-size:15.5px;color:#2a2b2e;transform:scaleX(0.9767);">p1g26p6jtdbc4jhn1796m5tel44.jpg</div>
<div class="t" style="left:366.30px;top:324.13px;line-height:19px;font-size:15.5px;color:#63676c;transform:scaleX(0.8879);">200</div>
<div class="t" style="left:481.25px;top:324.13px;line-height:19px;font-size:15.5px;color:#2a2b2e;transform:scaleX(0.9500);">jpeg</div>
<div class="t" style="left:594.44px;top:324.13px;line-height:19px;font-size:15.5px;color:#2a2b2e;transform:scaleX(0.9366);text-decoration:underline;text-underline-offset:2px">jquery.min.js:4</div>
<div class="t" style="left:784.70px;top:324.13px;line-height:19px;font-size:15.5px;color:#63676c;transform:scaleX(0.9459);">(memory cac...</div>
<div class="t" style="left:992.00px;top:324.13px;line-height:19px;font-size:15.5px;color:#2a2b2e;transform:scaleX(0.9220);">0 ms</div>
<div class="t" style="left:31.83px;top:350.13px;line-height:19px;font-size:15.5px;color:#2a2b2e;transform:scaleX(0.9679);">p1g26pa6l3skctr16m7pou9i4.jpg</div>
<div class="t" style="left:366.30px;top:350.13px;line-height:19px;font-size:15.5px;color:#63676c;transform:scaleX(0.8879);">200</div>
<div class="t" style="left:481.25px;top:350.13px;line-height:19px;font-size:15.5px;color:#2a2b2e;transform:scaleX(0.9500);">jpeg</div>
<div class="t" style="left:594.44px;top:350.13px;line-height:19px;font-size:15.5px;color:#2a2b2e;transform:scaleX(0.9366);text-decoration:underline;text-underline-offset:2px">jquery.min.js:4</div>
<div class="t" style="left:784.70px;top:350.13px;line-height:19px;font-size:15.5px;color:#63676c;transform:scaleX(0.9459);">(memory cac...</div>
<div class="t" style="left:992.00px;top:350.13px;line-height:19px;font-size:15.5px;color:#2a2b2e;transform:scaleX(0.9220);">0 ms</div>
<div class="t" style="left:31.82px;top:376.13px;line-height:19px;font-size:15.5px;color:#2a2b2e;transform:scaleX(0.9777);">p1g1o7uj541pra5jmo8pful7lk4.jpg</div>
<div class="t" style="left:366.30px;top:376.13px;line-height:19px;font-size:15.5px;color:#63676c;transform:scaleX(0.8879);">200</div>
<div class="t" style="left:481.25px;top:376.13px;line-height:19px;font-size:15.5px;color:#2a2b2e;transform:scaleX(0.9500);">jpeg</div>
<div class="t" style="left:594.44px;top:376.13px;line-height:19px;font-size:15.5px;color:#2a2b2e;transform:scaleX(0.9366);text-decoration:underline;text-underline-offset:2px">jquery.min.js:4</div>
<div class="t" style="left:784.70px;top:376.13px;line-height:19px;font-size:15.5px;color:#63676c;transform:scaleX(0.9459);">(memory cac...</div>
<div class="t" style="left:992.00px;top:376.13px;line-height:19px;font-size:15.5px;color:#2a2b2e;transform:scaleX(0.9220);">0 ms</div>
<div class="t" style="left:31.82px;top:403.13px;line-height:19px;font-size:15.5px;color:#2a2b2e;transform:scaleX(0.9768);">p1g26pcd93n4q139m1gnjeg8rtu4.jpg</div>
<div class="t" style="left:366.30px;top:403.13px;line-height:19px;font-size:15.5px;color:#63676c;transform:scaleX(0.8879);">200</div>
<div class="t" style="left:481.25px;top:403.13px;line-height:19px;font-size:15.5px;color:#2a2b2e;transform:scaleX(0.9500);">jpeg</div>
<div class="t" style="left:594.44px;top:403.13px;line-height:19px;font-size:15.5px;color:#2a2b2e;transform:scaleX(0.9366);text-decoration:underline;text-underline-offset:2px">jquery.min.js:4</div>
<div class="t" style="left:784.70px;top:403.13px;line-height:19px;font-size:15.5px;color:#63676c;transform:scaleX(0.9459);">(memory cac...</div>
<div class="t" style="left:992.00px;top:403.13px;line-height:19px;font-size:15.5px;color:#2a2b2e;transform:scaleX(0.9220);">0 ms</div>
<div class="t" style="left:31.82px;top:429.13px;line-height:19px;font-size:15.5px;color:#2a2b2e;transform:scaleX(0.9825);">p1g26pdnct1tl11ckpjuj1erc4bm4.jpg</div>
<div class="t" style="left:366.30px;top:429.13px;line-height:19px;font-size:15.5px;color:#63676c;transform:scaleX(0.8879);">200</div>
<div class="t" style="left:481.25px;top:429.13px;line-height:19px;font-size:15.5px;color:#2a2b2e;transform:scaleX(0.9500);">jpeg</div>
<div class="t" style="left:594.44px;top:429.13px;line-height:19px;font-size:15.5px;color:#2a2b2e;transform:scaleX(0.9366);text-decoration:underline;text-underline-offset:2px">jquery.min.js:4</div>
<div class="t" style="left:784.70px;top:429.13px;line-height:19px;font-size:15.5px;color:#63676c;transform:scaleX(0.9459);">(memory cac...</div>
<div class="t" style="left:992.00px;top:429.13px;line-height:19px;font-size:15.5px;color:#2a2b2e;transform:scaleX(0.9220);">0 ms</div>
<div class="t" style="left:32.80px;top:455.13px;line-height:19px;font-size:15.5px;color:#2a2b2e;transform:scaleX(0.9182);">5-l8jqqGMYGXLqGvj99FjA3wTtV4viBgC0nhJFF...</div>
<div class="t" style="left:365.34px;top:455.13px;line-height:19px;font-size:15.5px;color:#2a2b2e;transform:scaleX(0.9612);">101</div>
<div class="t" style="left:481.23px;top:455.13px;line-height:19px;font-size:15.5px;color:#2a2b2e;transform:scaleX(0.9316);">websocket</div>
<div class="t" style="left:592.53px;top:455.13px;line-height:19px;font-size:15.5px;color:#2a2b2e;transform:scaleX(0.9679);text-decoration:underline;text-underline-offset:2px">userscript.html?id=05cd4</div>
<div class="t" style="left:760.10px;top:455.13px;line-height:19px;font-size:15.5px;color:#2a2b2e;transform:scaleX(0.9046);">...</div>
<div class="t" style="left:866.80px;top:455.13px;line-height:19px;font-size:15.5px;color:#2a2b2e;transform:scaleX(0.8680);">0 B</div>
<div class="t" style="left:969.04px;top:455.13px;line-height:19px;font-size:15.5px;color:#63676c;transform:scaleX(0.9627);">Pending</div>
<div class="t" style="left:31.85px;top:481.13px;line-height:19px;font-size:15.5px;color:#2a2b2e;transform:scaleX(0.9473);">bgr_shadow_menu2.png</div>
<div class="t" style="left:366.30px;top:481.13px;line-height:19px;font-size:15.5px;color:#63676c;transform:scaleX(0.8879);">200</div>
<div class="t" style="left:479.26px;top:481.13px;line-height:19px;font-size:15.5px;color:#2a2b2e;transform:scaleX(1.0354);">png</div>
<div class="t" style="left:593.50px;top:481.13px;line-height:19px;font-size:15.5px;color:#2a2b2e;transform:scaleX(0.9325);text-decoration:underline;text-underline-offset:2px">cssMin?v=gxWgVvEVWQ</div>
<div class="t" style="left:760.10px;top:481.13px;line-height:19px;font-size:15.5px;color:#2a2b2e;transform:scaleX(0.9046);">...</div>
<div class="t" style="left:784.70px;top:481.13px;line-height:19px;font-size:15.5px;color:#63676c;transform:scaleX(0.9459);">(memory cac...</div>
<div class="t" style="left:992.00px;top:481.13px;line-height:19px;font-size:15.5px;color:#2a2b2e;transform:scaleX(0.9220);">0 ms</div>
<div class="t" style="left:31.83px;top:508.13px;line-height:19px;font-size:15.5px;color:#2a2b2e;transform:scaleX(0.9664);">next.png</div>
<div class="t" style="left:366.30px;top:508.13px;line-height:19px;font-size:15.5px;color:#63676c;transform:scaleX(0.8879);">200</div>
<div class="t" style="left:479.26px;top:508.13px;line-height:19px;font-size:15.5px;color:#2a2b2e;transform:scaleX(1.0354);">png</div>
<div class="t" style="left:593.50px;top:508.13px;line-height:19px;font-size:15.5px;color:#2a2b2e;transform:scaleX(0.9325);text-decoration:underline;text-underline-offset:2px">cssMin?v=gxWgVvEVWQ</div>
<div class="t" style="left:760.10px;top:508.13px;line-height:19px;font-size:15.5px;color:#2a2b2e;transform:scaleX(0.9046);">...</div>
<div class="t" style="left:784.70px;top:508.13px;line-height:19px;font-size:15.5px;color:#63676c;transform:scaleX(0.9459);">(memory cac...</div>
<div class="t" style="left:992.00px;top:508.13px;line-height:19px;font-size:15.5px;color:#2a2b2e;transform:scaleX(0.9220);">0 ms</div>
<div class="t" style="left:32.80px;top:534.13px;line-height:19px;font-size:15.5px;color:#2a2b2e;transform:scaleX(0.9381);">flowplayer.hlsjs.min.js?_=1654555715367</div>
<div class="t" style="left:366.30px;top:534.13px;line-height:19px;font-size:15.5px;color:#63676c;transform:scaleX(0.8879);">200</div>
<div class="t" style="left:480.30px;top:534.13px;line-height:19px;font-size:15.5px;color:#2a2b2e;transform:scaleX(0.9686);">xhr</div>
<div class="t" style="left:592.53px;top:534.13px;line-height:19px;font-size:15.5px;color:#2a2b2e;transform:scaleX(0.9679);text-decoration:underline;text-underline-offset:2px">userscript.html?id=05cd4</div>
<div class="t" style="left:760.10px;top:534.13px;line-height:19px;font-size:15.5px;color:#2a2b2e;transform:scaleX(0.9046);">...</div>
<div class="t" style="left:840.40px;top:534.13px;line-height:19px;font-size:15.5px;color:#2a2b2e;transform:scaleX(0.8866);">58.7 kB</div>
<div class="t" style="left:986.02px;top:534.13px;line-height:19px;font-size:15.5px;color:#2a2b2e;transform:scaleX(0.8752);">1.01 s</div>
<div class="t" style="left:32.80px;top:560.13px;line-height:19px;font-size:15.5px;color:#2a2b2e;transform:scaleX(0.9607);">Add</div>
<div class="t" style="left:366.30px;top:560.13px;line-height:19px;font-size:15.5px;color:#63676c;transform:scaleX(0.8879);">200</div>
<div class="t" style="left:480.30px;top:560.13px;line-height:19px;font-size:15.5px;color:#2a2b2e;transform:scaleX(0.9686);">xhr</div>
<div class="t" style="left:592.53px;top:560.13px;line-height:19px;font-size:15.5px;color:#2a2b2e;transform:scaleX(0.9679);text-decoration:underline;text-underline-offset:2px">userscript.html?id=05cd4</div>
<div class="t" style="left:760.10px;top:560.13px;line-height:19px;font-size:15.5px;color:#2a2b2e;transform:scaleX(0.9046);">...</div>
<div class="t" style="left:851.20px;top:560.13px;line-height:19px;font-size:15.5px;color:#2a2b2e;transform:scaleX(0.8838);">544 B</div>
<div class="t" style="left:976.10px;top:560.13px;line-height:19px;font-size:15.5px;color:#2a2b2e;transform:scaleX(0.9221);">231 ms</div>
<div class="t" style="left:32.80px;top:586.13px;line-height:19px;font-size:15.5px;color:#2a2b2e;transform:scaleX(0.9252);">vid26774_en.vtt</div>
<div class="t" style="left:366.30px;top:586.13px;line-height:19px;font-size:15.5px;color:#63676c;transform:scaleX(0.8879);">200</div>
<div class="t" style="left:480.30px;top:586.13px;line-height:19px;font-size:15.5px;color:#2a2b2e;transform:scaleX(0.9686);">xhr</div>
<div class="t" style="left:592.53px;top:586.13px;line-height:19px;font-size:15.5px;color:#2a2b2e;transform:scaleX(0.9679);text-decoration:underline;text-underline-offset:2px">userscript.html?id=05cd4</div>
<div class="t" style="left:760.10px;top:586.13px;line-height:19px;font-size:15.5px;color:#2a2b2e;transform:scaleX(0.9046);">...</div>
<div class="t" style="left:810.80px;top:586.13px;line-height:19px;font-size:15.5px;color:#63676c;transform:scaleX(0.9101);">(disk cache)</div>
<div class="t" style="left:992.30px;top:586.13px;line-height:19px;font-size:15.5px;color:#2a2b2e;transform:scaleX(0.9132);">2 ms</div>
<div class="t" style="left:31.83px;top:613.13px;line-height:19px;font-size:15.5px;color:#2a2b2e;transform:scaleX(0.9727);">manifest.mpd?tID=485803&amp;videoView=1&amp;acc...</div>
<div class="t" style="left:366.30px;top:613.13px;line-height:19px;font-size:15.5px;color:#63676c;transform:scaleX(0.8879);">200</div>
<div class="t" style="left:480.30px;top:613.13px;line-height:19px;font-size:15.5px;color:#2a2b2e;transform:scaleX(0.9686);">xhr</div>
<div class="t" style="left:592.53px;top:613.13px;line-height:19px;font-size:15.5px;color:#2a2b2e;transform:scaleX(0.9679);text-decoration:underline;text-underline-offset:2px">userscript.html?id=05cd4</div>
<div class="t" style="left:760.10px;top:613.13px;line-height:19px;font-size:15.5px;color:#2a2b2e;transform:scaleX(0.9046);">...</div>
<div class="t" style="left:848.50px;top:613.13px;line-height:19px;font-size:15.5px;color:#2a2b2e;transform:scaleX(0.8761);">3.5 kB</div>
<div class="t" style="left:976.10px;top:613.13px;line-height:19px;font-size:15.5px;color:#2a2b2e;transform:scaleX(0.9221);">283 ms</div>
<div class="t" style="left:32.80px;top:639.13px;line-height:19px;font-size:15.5px;color:#2a2b2e;transform:scaleX(0.8970);">cast_sender.js</div>
<div class="t" style="left:366.30px;top:639.13px;line-height:19px;font-size:15.5px;color:#63676c;transform:scaleX(0.8879);">200</div>
<div class="t" style="left:480.30px;top:639.13px;line-height:19px;font-size:15.5px;color:#2a2b2e;transform:scaleX(0.9569);">script</div>
<div class="t" style="left:593.50px;top:639.13px;line-height:19px;font-size:15.5px;color:#2a2b2e;transform:scaleX(0.9315);text-decoration:underline;text-underline-offset:2px">VM1008:10</div>
<div class="t" style="left:810.80px;top:639.13px;line-height:19px;font-size:15.5px;color:#63676c;transform:scaleX(0.9101);">(disk cache)</div>
<div class="t" style="left:992.30px;top:639.13px;line-height:19px;font-size:15.5px;color:#2a2b2e;transform:scaleX(0.9132);">2 ms</div>
<div class="t" style="left:32.80px;top:665.13px;line-height:19px;font-size:15.5px;color:#2a2b2e;transform:scaleX(0.8970);">cast_sender.js</div>
<div class="t" style="left:366.30px;top:665.13px;line-height:19px;font-size:15.5px;color:#63676c;transform:scaleX(0.8879);">200</div>
<div class="t" style="left:480.30px;top:665.13px;line-height:19px;font-size:15.5px;color:#2a2b2e;transform:scaleX(0.9569);">script</div>
<div class="t" style="left:592.53px;top:665.13px;line-height:19px;font-size:15.5px;color:#2a2b2e;transform:scaleX(0.9679);text-decoration:underline;text-underline-offset:2px">userscript.html?id=05cd4</div>
<div class="t" style="left:760.10px;top:665.13px;line-height:19px;font-size:15.5px;color:#2a2b2e;transform:scaleX(0.9046);">...</div>
<div class="t" style="left:810.80px;top:665.13px;line-height:19px;font-size:15.5px;color:#63676c;transform:scaleX(0.9101);">(disk cache)</div>
<div class="t" style="left:992.30px;top:665.13px;line-height:19px;font-size:15.5px;color:#2a2b2e;transform:scaleX(0.9132);">2 ms</div>
<div class="t" style="left:13.87px;top:692.13px;line-height:19px;font-size:15.5px;color:#63676c;transform:scaleX(0.9329);">129 requests</div>
<div class="t" style="left:122.50px;top:692.13px;line-height:19px;font-size:15.5px;color:#63676c;transform:scaleX(0.9418);">302 kB transferred</div>
<div class="t" style="left:266.58px;top:692.13px;line-height:19px;font-size:15.5px;color:#63676c;transform:scaleX(0.9240);">10.5 MB resources</div>
<div class="t" style="left:410.39px;top:692.13px;line-height:19px;font-size:15.5px;color:#63676c;transform:scaleX(0.9100);">Finish: 5.78 s</div>
<div class="t" style="left:518.26px;top:692.13px;line-height:19px;font-size:15.5px;color:#1a1aa6;transform:scaleX(0.9440);">DOMContentLoaded: 1.92 s</div>
<div class="t" style="left:724.09px;top:692.13px;line-height:19px;font-size:15.5px;color:#c80000;transform:scaleX(0.9105);">Load: 1.93 s</div>
</body></html>
